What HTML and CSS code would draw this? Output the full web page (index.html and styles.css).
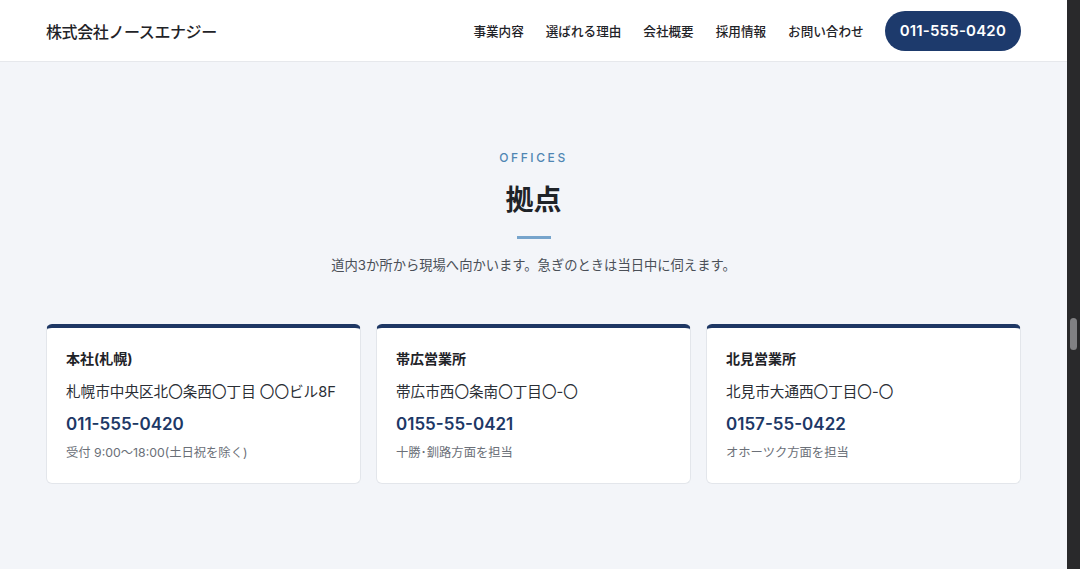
FILE: index.html
```html
<!DOCTYPE html>
<html lang="ja">
<head>
<meta charset="utf-8">
<title>株式会社ノースエナジー</title>
<link rel="stylesheet" href="styles.css">
</head>
<body>
<div class="window">
  <div class="page">
    <header class="header">
      <div class="container header-inner">
        <div class="logo">株式会社ノースエナジー</div>
        <nav class="nav">
          <a class="nav-link">事業内容</a>
          <a class="nav-link">選ばれる理由</a>
          <a class="nav-link">会社概要</a>
          <a class="nav-link">採用情報</a>
          <a class="nav-link">お問い合わせ</a>
          <a class="nav-cta">011-555-0420</a>
        </nav>
      </div>
    </header>
    <main class="offices">
      <div class="container">
        <div class="section-head">
          <p class="eyebrow">OFFICES</p>
          <h2 class="title">拠点</h2>
          <span class="title-rule"></span>
          <p class="lead">道内3か所から現場へ向かいます。急ぎのときは当日中に伺えます。</p>
        </div>
        <div class="cards">
          <article class="card">
            <h3 class="card-title">本社(札幌)</h3>
            <p class="card-addr">札幌市中央区北〇条西〇丁目 〇〇ビル8F</p>
            <p class="card-tel">011-555-0420</p>
            <p class="card-note">受付 9:00〜18:00(土日祝を除く)</p>
          </article>
          <article class="card">
            <h3 class="card-title">帯広営業所</h3>
            <p class="card-addr">帯広市西〇条南〇丁目〇-〇</p>
            <p class="card-tel">0155-55-0421</p>
            <p class="card-note">十勝･釧路方面を担当</p>
          </article>
          <article class="card">
            <h3 class="card-title">北見営業所</h3>
            <p class="card-addr">北見市大通西〇丁目〇-〇</p>
            <p class="card-tel">0157-55-0422</p>
            <p class="card-note">オホーツク方面を担当</p>
          </article>
        </div>
      </div>
    </main>
  </div>
  <div class="side-rail"><span class="side-rail-thumb"></span></div>
</div>
</body>
</html>
```
FILE: styles.css
```css
* { box-sizing: border-box; }
html, body { margin: 0; padding: 0; height: 100%; overflow: hidden; }
body {
  font-family: "Inter", "Noto Sans CJK JP", sans-serif;
  color: #1f2328;
  background: #f3f5f9;
}
.window { display: flex; width: 1080px; height: 569px; }
.page { flex: 1 1 auto; min-width: 0; background: #f3f5f9; }
.side-rail {
  flex: 0 0 13px;
  width: 13px;
  height: 569px;
  background: #29292b;
  box-shadow: inset 0 0 0 20px #29292b;
  padding: 318px 3px 0 3px;
}
.side-rail-thumb {
  display: block;
  width: 7px;
  height: 32px;
  border-radius: 4px;
  background: #808083;
}
.container { width: 975px; margin: 0 auto; }

.header {
  background: #ffffff;
  border-bottom: 1px solid #e6e8ec;
  height: 62px;
}
.header-inner {
  height: 61px;
  display: flex;
  align-items: center;
  justify-content: space-between;
}
.logo {
  font-size: 16px;
  font-weight: 500;
  color: #1f2328;
  letter-spacing: -0.4px;
}
.nav { display: flex; align-items: center; gap: 22px; }
.nav-link {
  font-size: 12.6px;
  font-weight: 500;
  color: #1f2328;
}
.nav-cta {
  margin-left: -1px;
  height: 40px;
  padding: 0 15px;
  display: flex;
  align-items: center;
  border-radius: 20px;
  background: #1d3a6c;
  color: #ffffff;
  font-size: 15px;
  font-weight: 600;
  letter-spacing: 0.2px;
}

.offices { padding-top: 88px; }
.section-head { display: flex; flex-direction: column; align-items: center; }
.eyebrow {
  margin: 0;
  font-size: 12px;
  line-height: 16px;
  letter-spacing: 2.6px;
  font-weight: 500;
  color: #4f86b3;
}
.title {
  margin: 14px 0 0;
  font-size: 28px;
  line-height: 40px;
  font-weight: 700;
  color: #1f2328;
}
.title-rule {
  display: block;
  margin-top: 16px;
  width: 34px;
  height: 3px;
  background: #76a4cc;
}
.lead {
  margin: 16px 0 0;
  font-size: 13.3px;
  line-height: 20px;
  color: #4a4f57;
}

.cards {
  margin-top: 49px;
  display: grid;
  grid-template-columns: repeat(3, 1fr);
  gap: 15px;
}
.card {
  background: #ffffff;
  border: 1px solid #e3e6eb;
  border-top: 4px solid #1e3764;
  border-radius: 6px;
  padding: 20px 19px 21px;
  height: 160px;
}
.card-title {
  margin: 0;
  font-size: 14px;
  line-height: 22px;
  font-weight: 700;
  color: #1f2328;
}
.card-addr {
  margin: 10px 0 0;
  font-size: 14.6px;
  line-height: 24px;
  color: #2a2e35;
}
.card-tel {
  margin: 7px 0 0;
  font-size: 17px;
  line-height: 26px;
  font-weight: 600;
  color: #1d3866;
}
.card-note {
  margin: 7px 0 0;
  font-size: 12.3px;
  line-height: 18px;
  color: #6b7078;
}
```
